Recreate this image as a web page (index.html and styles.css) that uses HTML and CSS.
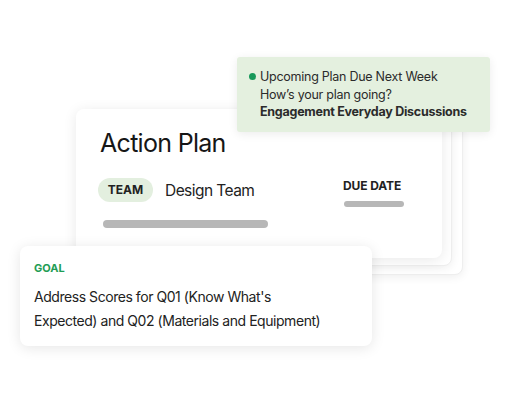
FILE: index.html
```html
<!DOCTYPE html>
<html lang="en">
<head>
	<meta charset="UTF-8">
	<title>Action Plan</title>
	<link rel="stylesheet" href="styles.css">
</head>
<body>
	<div class="stage">
		<!-- stacked cards behind the main one -->
		<div class="ghost ghost-back"></div>
		<div class="ghost ghost-mid"></div>

		<div class="plan">
			<h1 class="plan-title">Action Plan</h1>
			<div class="plan-body">
				<div class="plan-left">
					<div class="team-row">
						<span class="pill">TEAM</span>
						<span class="team-name">Design Team</span>
					</div>
					<div class="bar bar-long"></div>
				</div>
				<div class="plan-right">
					<div class="label">DUE DATE</div>
					<div class="bar bar-short"></div>
				</div>
			</div>
		</div>

		<div class="notice">
			<div class="notice-line"><span class="dot"></span>Upcoming Plan Due Next Week</div>
			<div class="notice-line">How’s your plan going?</div>
			<div class="notice-line strong">Engagement Everyday Discussions</div>
		</div>

		<div class="goal">
			<div class="goal-label">GOAL</div>
			<p class="goal-text">Address Scores for Q01 (Know What's<br>Expected) and Q02 (Materials and Equipment)</p>
		</div>
	</div>
</body>
</html>
```

FILE: styles.css
```css
*{
	margin: 0;
	padding: 0;
	box-sizing: border-box;
}
body{
	background: #fff;
	font-family: Inter, "Noto Sans", sans-serif;
	color: #1f1f1f;
}
.stage{
	position: relative;
	width: 520px;
	height: 400px;
	padding: 109px 0 0 76px;
}

/* main card */
.plan{
	position: relative;
	z-index: 3;
	width: 366px;
	height: 149px;
	background: #fff;
	border-radius: 8px;
	box-shadow: 0 2px 14px rgba(0,0,0,0.09);
	padding: 18px 37px 0 22px;
}
.plan-title{
	font-size: 25px;
	line-height: 32px;
	font-weight: 400;
	letter-spacing: -0.7px;
	margin-left: 2px;
	color: #161616;
}
.plan-body{
	display: flex;
	margin-top: 19px;
}
.plan-left{
	flex: 1;
}
.team-row{
	display: flex;
	align-items: center;
	gap: 12px;
}
.pill{
	display: block;
	width: 55px;
	height: 24px;
	line-height: 24px;
	text-align: center;
	border-radius: 12px;
	background: #e3efdf;
	font-size: 12px;
	font-weight: 700;
	color: #222;
}
.team-name{
	font-size: 15.5px;
	letter-spacing: -0.55px;
	color: #222;
}
.bar{
	background: #b7b7b7;
	border-radius: 4px;
}
.bar-long{
	width: 165px;
	height: 8px;
	margin: 18px 0 0 5px;
}
.plan-right{
	width: 62px;
}
.label{
	font-size: 12px;
	line-height: 16px;
	font-weight: 700;
	letter-spacing: -0.1px;
	color: #222;
}
.bar-short{
	width: 60px;
	height: 6px;
	margin: 7px 0 0 1px;
	border-radius: 3px;
}

/* cards stacked behind */
.ghost{
	position: absolute;
	background: #fff;
	border-radius: 8px;
	box-shadow: 0 2px 10px rgba(0,0,0,0.07);
	border: 1px solid #eeeeee;
}
.ghost-mid{
	z-index: 2;
	left: 86px;
	top: 113px;
	width: 366px;
	height: 153px;
}
.ghost-back{
	z-index: 1;
	left: 97px;
	top: 118px;
	width: 366px;
	height: 157px;
}

/* notification */
.notice{
	position: absolute;
	z-index: 4;
	left: 237px;
	top: 57px;
	width: 253px;
	height: 75px;
	background: #e4f0df;
	border-radius: 3px;
	box-shadow: 0 2px 10px rgba(0,0,0,0.08);
	padding: 11px 0 0 23px;
	font-size: 12.5px;
	line-height: 17.5px;
	letter-spacing: -0.26px;
	color: #2b2b2b;
}
.notice-line{
	position: relative;
}
.strong{
	font-weight: 700;
}
.dot{
	position: absolute;
	left: -11px;
	top: 5px;
	width: 7px;
	height: 7px;
	border-radius: 50%;
	background: #17995a;
}

/* goal card */
.goal{
	position: absolute;
	z-index: 5;
	left: 20px;
	top: 246px;
	width: 352px;
	height: 100px;
	background: #fff;
	border-radius: 8px;
	box-shadow: 0 2px 14px rgba(0,0,0,0.1);
	padding: 15px 14px 0 14px;
}
.goal-label{
	font-size: 11px;
	line-height: 14px;
	font-weight: 700;
	color: #1f9d55;
}
.goal-text{
	margin-top: 10px;
	font-size: 14px;
	line-height: 24px;
	letter-spacing: -0.45px;
	color: #222;
}
```
